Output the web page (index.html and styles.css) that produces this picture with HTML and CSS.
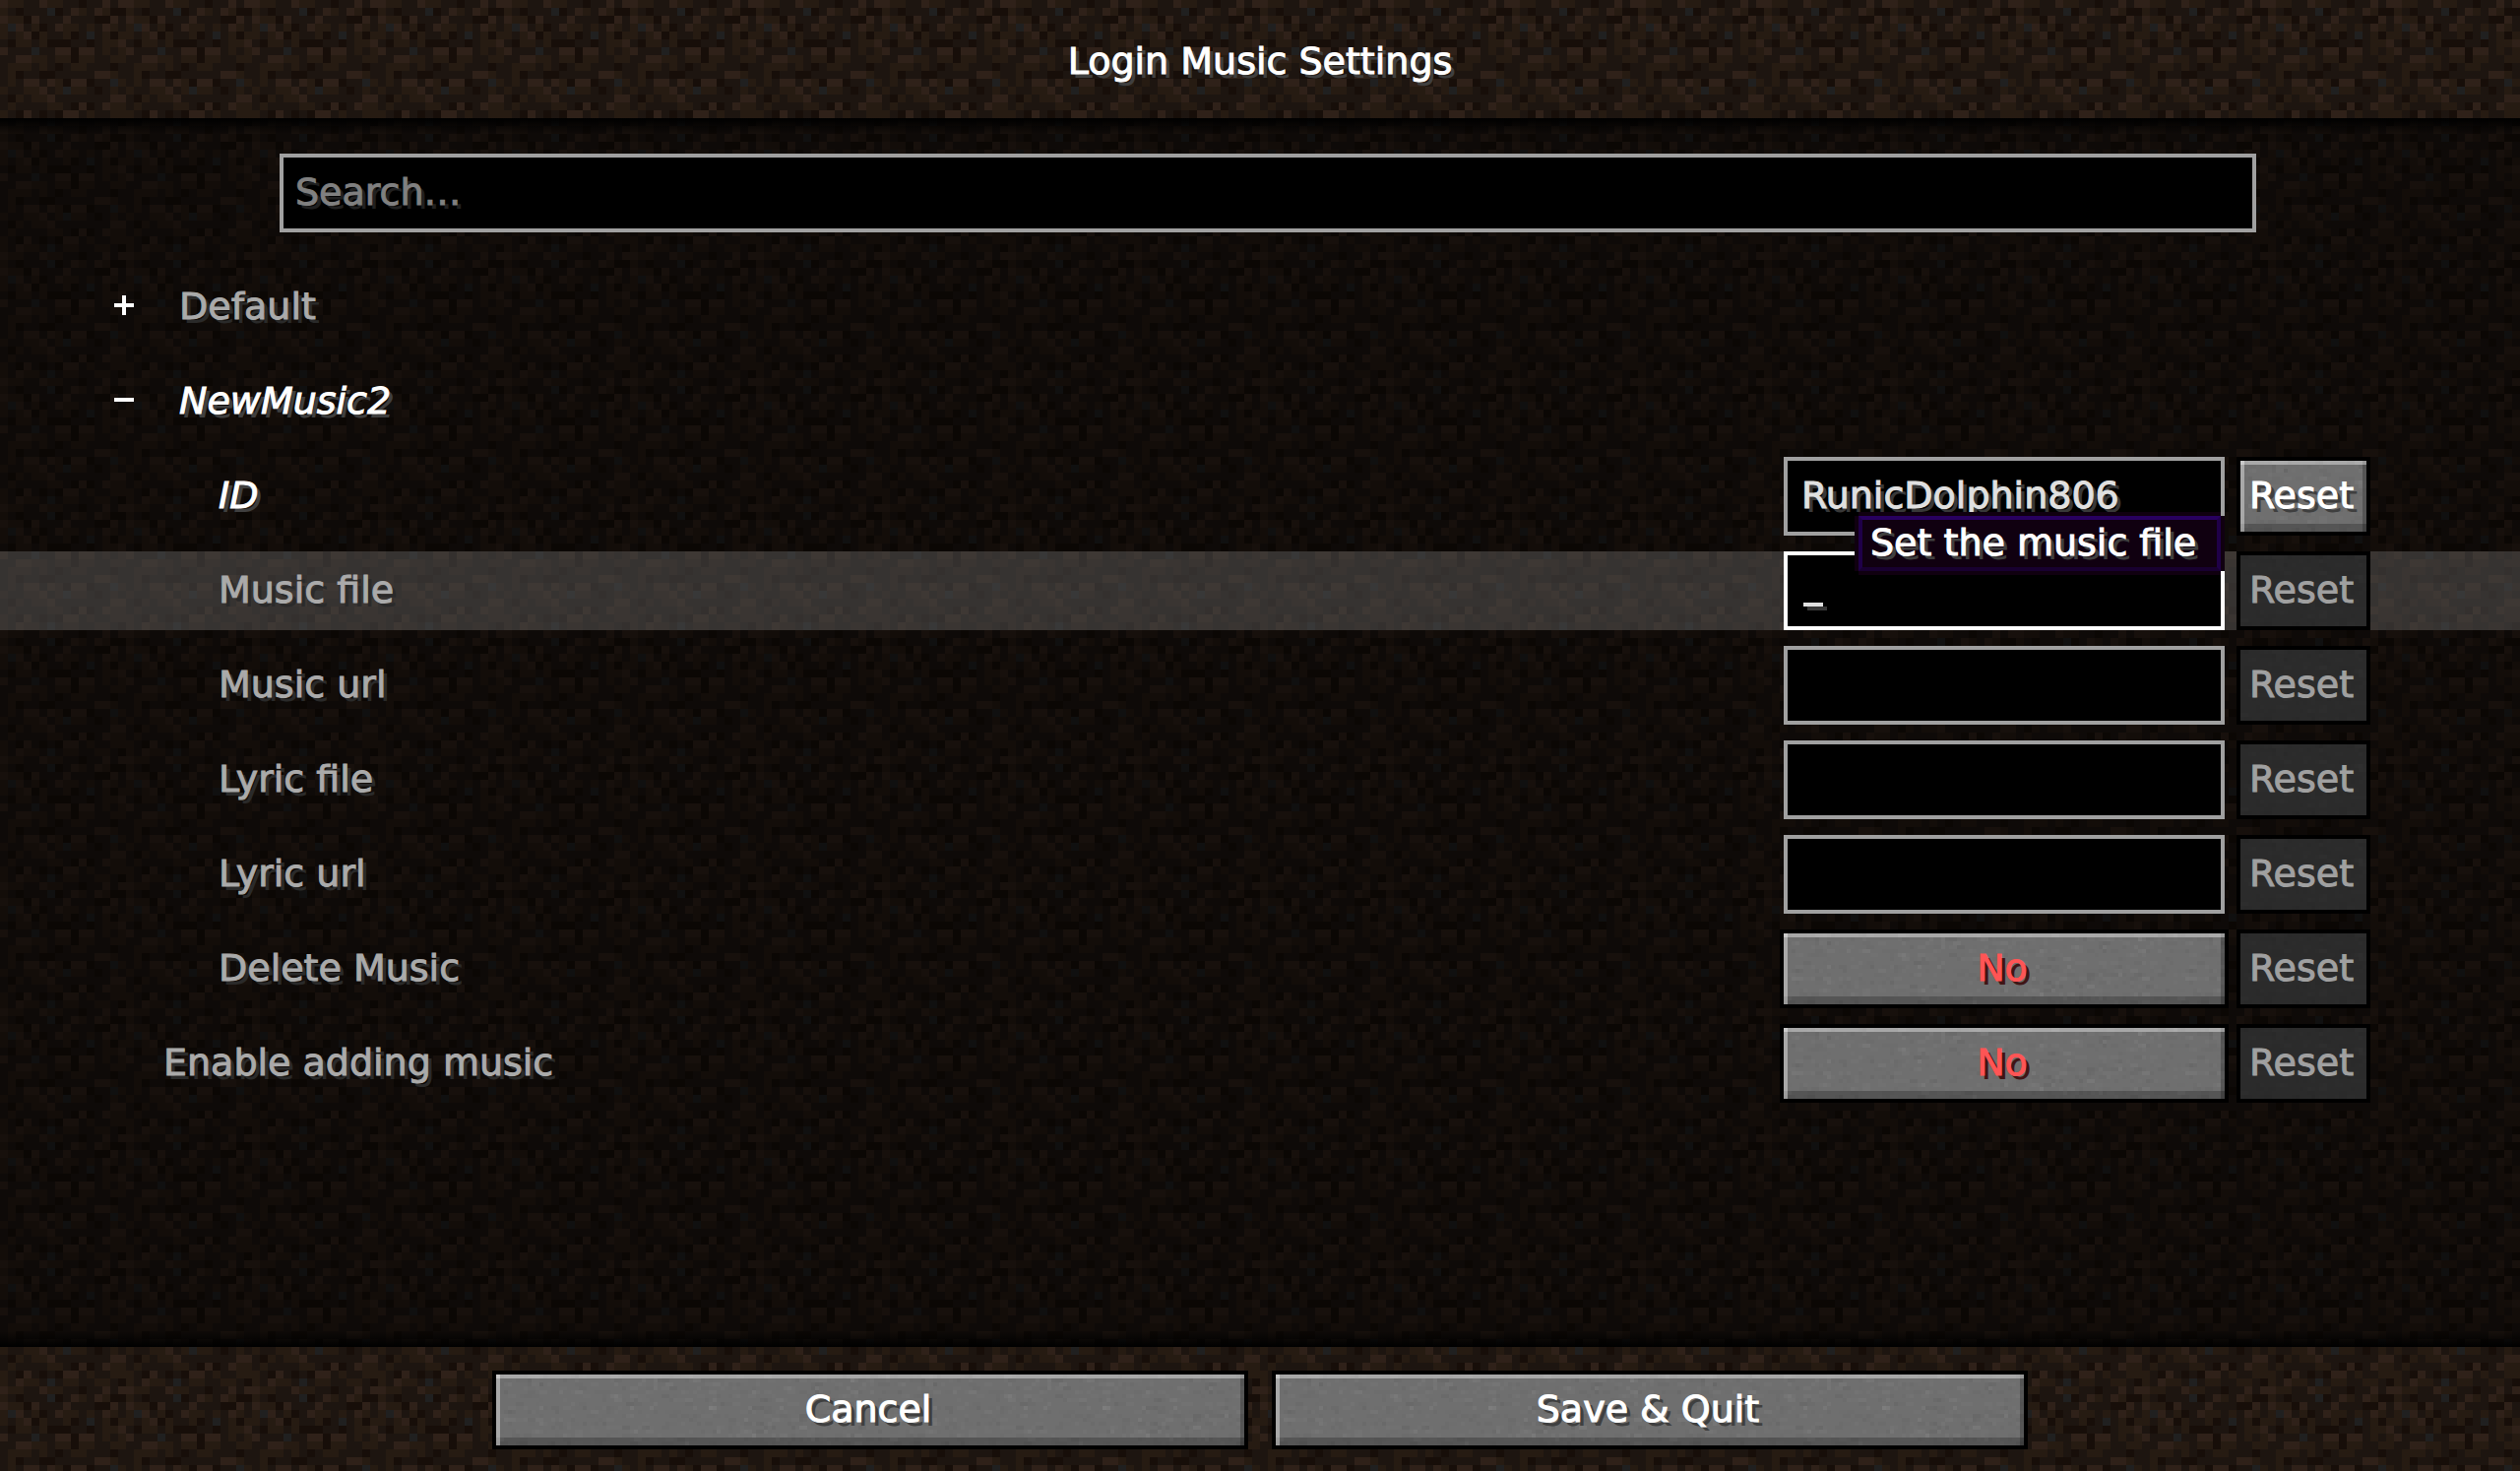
FILE: index.html
```html
<!DOCTYPE html>
<html lang="en">
<head>
<meta charset="utf-8">
<title>Login Music Settings</title>
<link rel="stylesheet" href="styles.css">
<script src="textures.js"></script>
</head>
<body>
<header class="titlebar"><h1 class="title">Login Music Settings</h1></header>
<main class="panel">
  <input class="field search" type="text" placeholder="Search…" aria-label="Search">
  <div class="rows">
    <div class="row">
      <button class="toggle" type="button" aria-label="Expand Default" aria-expanded="false">
        <svg width="20" height="20" viewBox="0 0 5 5" shape-rendering="crispEdges"><path d="M2 0h1v2h2v1H3v2H2V3H0V2h2z" fill="#fff"/></svg>
      </button>
      <span class="label group">Default</span>
    </div>
    <div class="row">
      <button class="toggle" type="button" aria-label="Collapse NewMusic2" aria-expanded="true">
        <svg width="20" height="20" viewBox="0 0 5 5" shape-rendering="crispEdges"><path d="M0 2h5v1H0z" fill="#fff"/></svg>
      </button>
      <span class="label group edited">NewMusic2</span>
    </div>
    <div class="row">
      <label class="label child edited" for="id">ID</label>
      <div class="slot"><input class="field" id="id" type="text" value="RunicDolphin806"></div>
      <button class="btn reset" type="button">Reset</button>
    </div>
    <div class="row hovered">
      <label class="label child" for="music-file">Music file</label>
      <div class="slot">
        <input class="field active" id="music-file" type="text" aria-describedby="tip">
        <span class="caret"></span>
        <div class="tooltip" id="tip" role="tooltip">Set the music file</div>
      </div>
      <button class="btn reset" type="button" disabled>Reset</button>
    </div>
    <div class="row">
      <label class="label child" for="music-url">Music url</label>
      <div class="slot"><input class="field" id="music-url" type="text"></div>
      <button class="btn reset" type="button" disabled>Reset</button>
    </div>
    <div class="row">
      <label class="label child" for="lyric-file">Lyric file</label>
      <div class="slot"><input class="field" id="lyric-file" type="text"></div>
      <button class="btn reset" type="button" disabled>Reset</button>
    </div>
    <div class="row">
      <label class="label child" for="lyric-url">Lyric url</label>
      <div class="slot"><input class="field" id="lyric-url" type="text"></div>
      <button class="btn reset" type="button" disabled>Reset</button>
    </div>
    <div class="row">
      <label class="label child" for="delete-music">Delete Music</label>
      <div class="slot"><button class="btn choice" id="delete-music" type="button">No</button></div>
      <button class="btn reset" type="button" disabled>Reset</button>
    </div>
    <div class="row">
      <label class="label" for="enable-adding">Enable adding music</label>
      <div class="slot"><button class="btn choice" id="enable-adding" type="button">No</button></div>
      <button class="btn reset" type="button" disabled>Reset</button>
    </div>
  </div>
</main>
<footer class="actions">
  <button class="btn" type="button">Cancel</button>
  <button class="btn" type="button">Save &amp; Quit</button>
</footer>
</body>
</html>
```
FILE: styles.css
```css
* { box-sizing: border-box; }

body {
  margin: 0;
  min-height: 100vh;
  display: flex;
  flex-direction: column;
  background: #1d1510 var(--dirt) 0 0 / 128px 128px;
  color: #fff;
  font: 38px/44px "DejaVu Sans", sans-serif;
  text-shadow: 4px 4px #3f3f3f;
  -webkit-text-stroke: 1px;
}

button, input { font: inherit; color: inherit; text-shadow: inherit; }

.titlebar {
  height: 120px;
  display: flex;
  align-items: center;
  justify-content: center;
}

.title { margin: 0; padding-top: 4px; font-size: 38px; font-weight: 400; }

.panel {
  flex: 1;
  padding: 36px 0;
  background:
    linear-gradient(#000, transparent) top / 100% 16px no-repeat,
    linear-gradient(transparent, #000) bottom / 100% 16px no-repeat,
    rgba(0, 0, 0, .5);
}

.field {
  display: block;
  width: 448px;
  height: 80px;
  margin: 0 4px;
  padding: 0 14px 2px;
  border: 4px solid #a0a0a0;
  border-radius: 0;
  outline: 0;
  background: #000;
  color: #e0e0e0;
  text-shadow: 4px 4px #383838;
}

.field.active { border-color: #fff; }

.search {
  width: calc(100% - 552px);
  margin: 0 268px 36px 284px;
  padding-left: 12px;
}

.search::placeholder { color: #808080; opacity: 1; text-shadow: 4px 4px #202020; }

.rows { display: flex; flex-direction: column; gap: 16px; }

.row {
  display: flex;
  align-items: center;
  gap: 8px;
  height: 80px;
  padding: 0 152px 0 116px;
}

.hovered { background: rgba(255, 255, 255, .17); }

.toggle {
  display: flex;
  width: 20px;
  height: 20px;
  padding: 0;
  border: 0;
  background: none;
  margin-bottom: 4px;
}

.label {
  flex: 1;
  padding: 0 0 2px 50px;
  color: #aaa;
  text-shadow: 4px 4px #2a2a2a;
}

.label.group { padding-left: 38px; }
.label.child { padding-left: 106px; }
.label.edited { color: #fff; font-style: italic; text-shadow: 4px 4px #3f3f3f; }

.slot { position: relative; width: 456px; }

.caret {
  position: absolute;
  left: 24px;
  bottom: 24px;
  width: 20px;
  height: 4px;
  background: #e0e0e0;
  box-shadow: 4px 4px #383838;
}

.tooltip {
  position: absolute;
  z-index: 1;
  right: 8px;
  top: -36px;
  width: 368px;
  padding: 1px 8px 3px;
  border: 4px solid;
  border-color: #28005f #1f0048 #180030;
  background: #100010;
  box-shadow: 4px 0 #100010, -4px 0 #100010, 0 4px #100010, 0 -4px #100010;
  white-space: nowrap;
}

.btn {
  flex: none;
  width: 768px;
  height: 80px;
  padding: 0 4px 2px 0;
  border: 4px solid #000;
  border-radius: 0;
  background: #6f6f6f var(--stone) 0 0 / 400px 80px;
  box-shadow:
    inset 4px 0 rgba(255, 255, 255, .4),
    inset 0 4px rgba(255, 255, 255, .4),
    inset -4px 0 rgba(0, 0, 0, .23),
    inset 0 -8px rgba(0, 0, 0, .23);
}

.btn.reset { width: 136px; }
.btn.choice { display: block; width: 456px; color: #f55; text-shadow: 4px 4px #3f1515; }

.btn:disabled {
  background-color: #2b2b2b;
  background-blend-mode: soft-light;
  box-shadow: none;
  color: #a0a0a0;
  text-shadow: none;
}

.actions {
  display: flex;
  justify-content: center;
  gap: 24px;
  padding: 24px 24px 22px;
}
```
FILE: textures.js
```js
// Builds the tiled dirt and stone textures as vector backgrounds.
const DIRT = [
  "lmm..lmm..k..l.l",
  "m.k...gk.lm.lmkk",
  "lmmkl...l...kkl.",
  "mgl.mk.lmm.m.lm.",
  "m.mlkm..mk.g.mkm",
  ".kmm.mkkk..k.mml",
  "l...g..llkll.m.m",
  "..llmm.mmkmm..mm",
  ".mmm.m.k.mm...k.",
  ".mk..kk.....llm.",
  ".m.ll.lmkllk..gm",
  "m..mml.mgmm.k.m.",
  ".km.mml.......ll",
  ".m....mm.klk.lmm",
  "m.kl.k.kll.m..mm",
  "m.lmm.g.mm..mm.k"
];
const COLORS = { l: "#2f2119", m: "#261b12", k: "#170e09", g: "#202020" };

function tile(w, h, cells) {
  const svg = `<svg xmlns="http://www.w3.org/2000/svg" width="${w * 8}" height="${h * 8}" viewBox="0 0 ${w} ${h}" shape-rendering="crispEdges">${cells}</svg>`;
  return `url("data:image/svg+xml,${encodeURIComponent(svg)}")`;
}

const dirt = DIRT.flatMap((row, y) => [...row].map((c, x) =>
  c === "." ? "" : `<rect x="${x}" y="${y}" width="1" height="1" fill="${COLORS[c]}"/>`)).join("");

let seed = 7;
const random = () => (seed = (seed * 16807) % 2147483647) / 2147483647;
let stone = "";
for (let i = 0; i < 700; i++) {
  const x = Math.floor(random() * 100);
  const y = Math.floor(random() * 20);
  const width = 1 + Math.floor(random() * 2);
  const fill = random() < 0.5 ? "#fff" : "#000";
  const alpha = (0.01 + random() * random() * 0.05).toFixed(3);
  stone += `<rect x="${x}" y="${y}" width="${width}" height="1" fill="${fill}" fill-opacity="${alpha}"/>`;
}

const root = document.documentElement.style;
root.setProperty("--dirt", tile(16, 16, dirt));
root.setProperty("--stone", tile(100, 20, stone));
```
